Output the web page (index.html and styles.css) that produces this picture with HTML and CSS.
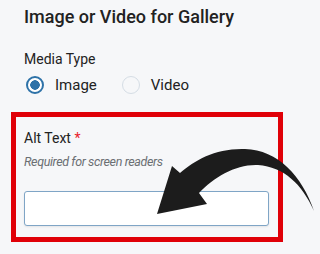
FILE: index.html
```html
<!DOCTYPE html>
<html lang="en">
<head>
<meta charset="utf-8">
<title>Image or Video for Gallery</title>
<link rel="stylesheet" href="styles.css">
</head>
<body>
<main class="panel">
  <h2 class="title">Image or Video for Gallery</h2>
  <div class="field">
    <div class="label">Media Type</div>
    <div class="radios">
      <label class="radio"><span class="dot checked"></span>Image</label>
      <label class="radio"><span class="dot"></span>Video</label>
    </div>
  </div>
  <div class="highlight">
    <div class="label">Alt Text <span class="req">*</span></div>
    <div class="help">Required for screen readers</div>
    <input class="text-input" type="text" aria-label="Alt Text">
  </div>
  <svg class="arrow" width="320" height="254" viewBox="0 0 320 254" aria-hidden="true">
    <path d="M314 211 C302 176 278 150 245 149 C216 148 195 160 180 173 L172 166 L157 214 L207 204 L199 193 C214 177 236 164 258 165 C284 167 302 184 314 211 Z" fill="#1c1c1c"/>
  </svg>
</main>
</body>
</html>
```
FILE: styles.css
```css
html, body {
  margin: 0;
  padding: 0;
  background: #f6f7f9;
}
.panel {
  position: relative;
  width: 320px;
  height: 254px;
  overflow: hidden;
  font-family: Roboto, "Open Sans", sans-serif;
  color: #222;
}
.title {
  margin: 5px 0 0 24px;
  font-size: 18px;
  font-weight: 500;
  line-height: 24px;
  color: #222;
}
.field {
  margin: 20px 0 0 24px;
}
.label {
  font-size: 14px;
  line-height: 20px;
  color: #222;
}
.radios {
  display: flex;
  gap: 23px;
  margin-top: 5px;
}
.radio {
  display: flex;
  align-items: center;
  gap: 11px;
  font-size: 15px;
  line-height: 22px;
  color: #222;
}
.dot {
  width: 18px;
  height: 18px;
  box-sizing: border-box;
  border-radius: 50%;
  border: 1.5px solid #d5dde5;
  background: #f6f7f9;
  margin-left: 2px;
}
.dot.checked {
  border: 2px solid #2e72a8;
  background: radial-gradient(circle, #2e72a8 0 4.5px, #ffffff 5px);
}
.highlight {
  margin: 16px 0 0 11px;
  width: 272px;
  height: 130px;
  box-sizing: border-box;
  border: 5px solid #e00008;
  padding: 11px 9px 0 8px;
}
.req {
  color: #e8202a;
}
.help {
  margin-top: 5px;
  font-size: 12.5px;
  font-style: italic;
  letter-spacing: -0.38px;
  line-height: 18px;
  color: #6b6f73;
}
.text-input {
  display: block;
  margin-top: 20px;
  width: 100%;
  height: 35px;
  box-sizing: border-box;
  border: 1px solid #7fa5c6;
  border-radius: 3px;
  background: #fff;
  box-shadow: 0 1px 2px rgba(0, 0, 0, 0.08);
  outline: none;
}
.arrow {
  position: absolute;
  left: 0;
  top: 0;
  pointer-events: none;
}
```
